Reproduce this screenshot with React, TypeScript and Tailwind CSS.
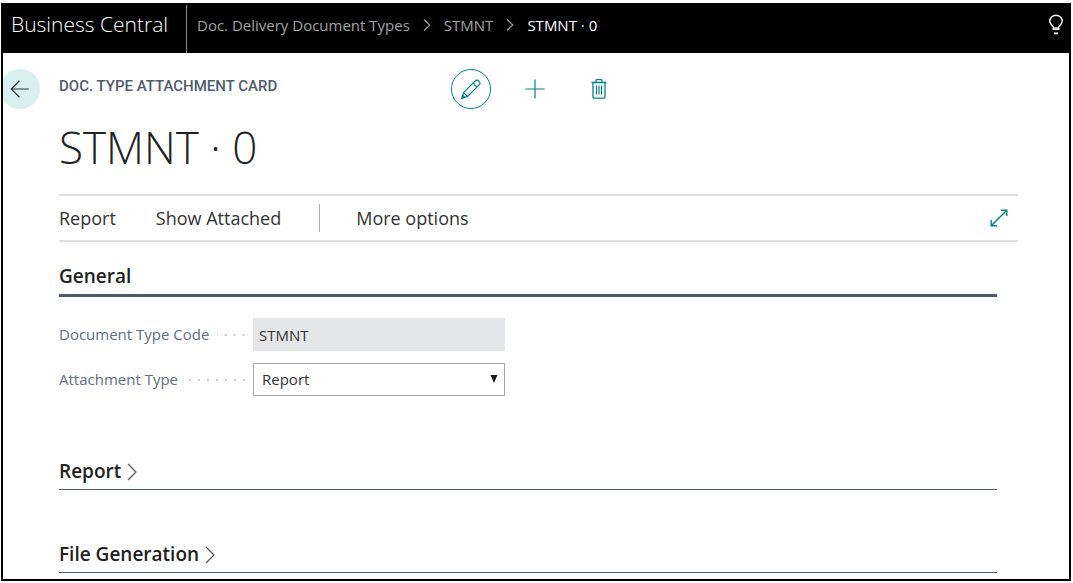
import { useState } from "react";
import type { ReactNode } from "react";

function CrumbChevron() {
  return (
    <svg width="8" height="14" viewBox="0 0 8 14" fill="none" stroke="#a3a3a3" strokeWidth="1.1" aria-hidden="true">
      <path d="M1 1.5 6.8 7 1 12.5" />
    </svg>
  );
}

function TopBar() {
  return (
    <header className="flex h-12 items-stretch bg-black">
      <a href="#home" className="flex w-[184px] shrink-0 border-r border-[#8a8a8a] pt-1 pl-2 text-[21px] leading-[30px] font-light whitespace-nowrap text-white">
        Business Central
      </a>
      <nav aria-label="Breadcrumb" className="flex h-10 grow items-center pl-[10px] text-[15px] whitespace-nowrap text-[#a3a3a3]">
        <a href="#types">Doc. Delivery Document Types</a>
        <span className="flex w-[34px] justify-center"><CrumbChevron /></span>
        <a href="#stmnt">STMNT</a>
        <span className="flex w-[34px] justify-center"><CrumbChevron /></span>
        <span aria-current="page" className="font-medium text-white">STMNT · 0</span>
      </nav>
      <button type="button" aria-label="Tell me what you want to do" className="flex h-10 w-[26px] items-center justify-center">
        <svg width="16" height="22" viewBox="0 0 16 22" fill="none" stroke="white" strokeWidth="1.4" aria-hidden="true">
          <path d="M5.3 15.4v-2.2C4.7 11.4 1.7 10.3 1.7 7.1a6.3 5.9 0 0 1 12.6 0c0 3.2-3 4.3-3.6 6.1v2.2z" />
          <path d="M5.3 13.6h5.4v2H5.3z" fill="#ccc" strokeWidth="0.6" />
          <path d="M6 19.4h4" strokeWidth="1.8" />
        </svg>
      </button>
    </header>
  );
}

function PencilIcon() {
  return (
    <svg width="20" height="20" viewBox="0 0 20 20" fill="none" stroke="currentColor" strokeWidth="1.2" aria-hidden="true">
      <path d="M1 19 2.6 13.6 14 2.2a2.8 2.8 0 0 1 4 4L6.6 17.4z" />
      <path d="M2.6 13.6 6.6 17.4M12.7 3.5c.2 2.3 1.7 3.8 4 4" />
      <path d="M1 19l.8-2.6 1.8 1.8z" fill="currentColor" />
    </svg>
  );
}

function PlusIcon() {
  return (
    <svg width="20" height="20" viewBox="0 0 20 20" fill="none" stroke="currentColor" strokeWidth="1.2" aria-hidden="true">
      <path d="M10 .5v19M.5 10h19" />
    </svg>
  );
}

function TrashIcon() {
  return (
    <svg width="16" height="20" viewBox="0 0 16 20" fill="none" stroke="currentColor" strokeWidth="1.3" aria-hidden="true">
      <path d="M.5 3.5h15" strokeWidth="1.5" />
      <path d="M5 3.3V1.4c0-.4.2-.7.6-.7h4.8c.4 0 .6.3.6.7v1.9M2 3.5v14.4c0 .8.4 1.3 1.3 1.3h9.4c.9 0 1.3-.5 1.3-1.3V3.5" />
      <path d="M5.5 6.5v9M8 6.5v9M10.5 6.5v9" strokeWidth="1.2" />
    </svg>
  );
}

function CardHeader() {
  return (
    <div className="grid h-10 grid-cols-[56px_1fr] items-center">
      <div className="overflow-hidden">
        <button type="button" aria-label="Back" className="-ml-[3px] flex size-10 items-center justify-center rounded-full bg-[#d8f0f2] text-[#333]">
          <svg width="20" height="18" viewBox="0 0 20 18" fill="none" stroke="currentColor" strokeWidth="1.2" aria-hidden="true">
            <path d="M9.5 .8 1.2 9l8.3 8.2M1.2 9h17.6" />
          </svg>
        </button>
      </div>
      <div className="flex items-center text-[#008489]">
        <p className="w-[392px] pb-[6px] font-[Roboto] text-[15px] font-medium whitespace-nowrap text-[#505c6d]">
          DOC. TYPE ATTACHMENT CARD
        </p>
        <button type="button" aria-label="Edit" className="flex size-10 items-center justify-center rounded-full border-[1px] border-[#008489]">
          <PencilIcon />
        </button>
        <button type="button" aria-label="New" className="ml-6 flex size-10 items-center justify-center"><PlusIcon /></button>
        <button type="button" aria-label="Delete" className="ml-6 flex size-10 items-center justify-center"><TrashIcon /></button>
      </div>
    </div>
  );
}

function ActionBar() {
  return (
    <div className="mr-[51px] ml-14 flex h-12 items-center border-y-2 border-[#dedee3] text-lg whitespace-nowrap text-[#333]">
      <button type="button">Report</button>
      <button type="button" className="ml-10">Show Attached</button>
      <span className="ml-[38px] h-7 w-px bg-[#a6adb6]" />
      <button type="button" className="ml-9">More options</button>
      <button type="button" aria-label="Expand" className="mr-[10px] ml-auto text-[#008489]">
        <svg width="18" height="18" viewBox="0 0 18 18" fill="none" stroke="currentColor" strokeWidth="1.4" aria-hidden="true">
          <path d="M1.2 16.8 16.8 1.2M11 1.2h5.8V7M1.2 11v5.8H7" />
        </svg>
      </button>
    </div>
  );
}

function Dots() {
  return (
    <span
      className="mr-2 h-[2px] min-w-0 grow bg-[linear-gradient(to_left,#c9ccd1_2px,transparent_2px)] bg-[length:9px_2px] bg-right"
      aria-hidden="true"
    />
  );
}

function Field({ id, label, children }: { id: string; label: string; children: ReactNode }) {
  return (
    <div className="flex h-[33px] items-center">
      <div className="flex w-[194px] items-center gap-2 text-[15px] text-[#616e7f]">
        <label htmlFor={id} className="whitespace-nowrap">{label}</label>
        <Dots />
      </div>
      <div className="relative h-full w-[252px]">{children}</div>
    </div>
  );
}

function CollapsedSection({ title }: { title: string }) {
  const [open, setOpen] = useState(false);
  return (
    <section className="border-b border-[#505c6d] pb-1">
      <h2>
        <button type="button" aria-expanded={open} onClick={() => setOpen(!open)} className="flex h-7 items-center gap-[6px] text-[19px] font-semibold text-[#212121]">
          {title}
          <svg width="10" height="18" viewBox="0 0 10 18" fill="none" stroke="#555" strokeWidth="1.2" className="mt-[2px]" aria-hidden="true">
            <path d="M1 1l8 8-8 8" />
          </svg>
        </button>
      </h2>
    </section>
  );
}

export default function App() {
  return (
    <div className="min-h-screen bg-white pt-[3px] pr-[2px] pb-[2px] pl-px font-['Open_Sans',sans-serif]">
      <div className="border-2 border-black">
        <TopBar />
        <main className="pt-4 pb-[6px]">
          <CardHeader />
          <h1 className="mt-2 ml-14 text-[44px] leading-[60px] font-light text-[#212121]">STMNT · 0</h1>
          <div className="mt-[17px]"><ActionBar /></div>
          <div className="mr-[72px] ml-14">
            <section>
              <h2 className="mt-5 border-b-[3px] border-[#505c6d] pb-1 text-[19px] leading-7 font-semibold text-[#212121]">General</h2>
              <div className="mt-[21px] flex flex-col gap-3">
                <Field id="doc-code" label="Document Type Code">
                  <input id="doc-code" readOnly defaultValue="STMNT" className="h-full w-full bg-[#e5e6e8] px-[6px] text-[15px] text-[#333]" />
                </Field>
                <Field id="att-type" label="Attachment Type">
                  <select id="att-type" defaultValue="Report" className="h-full w-full appearance-none border border-[#a6a6a6] bg-white px-2 text-[15px] text-[#333]">
                    <option>Report</option>
                  </select>
                  <svg width="8" height="8" viewBox="0 0 8 8" className="pointer-events-none absolute top-3 right-[7px]" aria-hidden="true">
                    <path d="M.5 0h7L4 8z" fill="#1a1a1a" />
                  </svg>
                </Field>
              </div>
            </section>
            <div className="mt-[61px] flex flex-col gap-[50px]">
              <CollapsedSection title="Report" />
              <CollapsedSection title="File Generation" />
            </div>
          </div>
        </main>
      </div>
    </div>
  );
}
